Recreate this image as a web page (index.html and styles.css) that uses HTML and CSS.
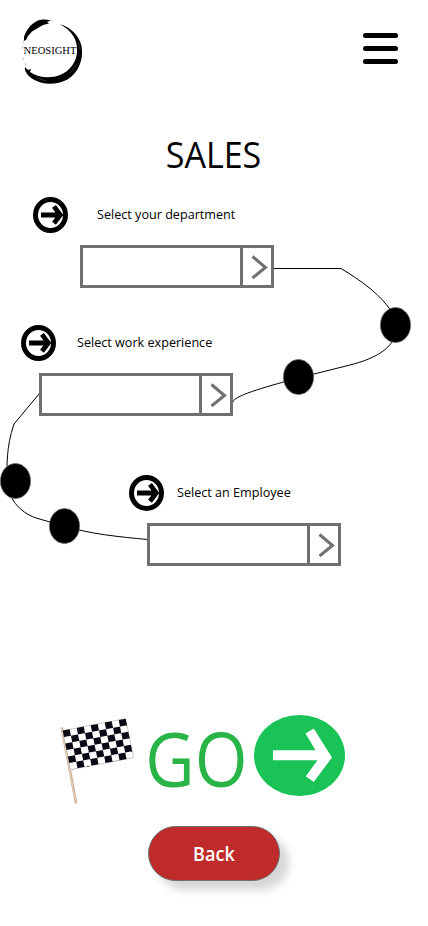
FILE: index.html
```html
<!DOCTYPE html>
<html lang="en">
<head>
<meta charset="utf-8">
<meta name="viewport" content="width=device-width, initial-scale=1">
<title>Neosight - Sales</title>
<link rel="stylesheet" href="styles.css">
</head>
<body>
<svg class="defs" width="0" height="0" aria-hidden="true">
  <symbol id="step-arrow" viewBox="0 0 35 36">
    <ellipse cx="17.5" cy="18" rx="15" ry="15.5" fill="#fff" stroke="#000" stroke-width="5"/>
    <path d="M8 18H27M21 9.3L27.3 18L21 26.3" fill="none" stroke="#000" stroke-width="4.8"/>
  </symbol>
  <symbol id="chevron" viewBox="0 0 28 37">
    <path d="M9.500 8.500L22.500 19.500L9.500 30" fill="none" stroke="#707070" stroke-width="3"/>
  </symbol>
</svg>
<main class="screen">
  <header class="header">
    <svg class="logo" viewBox="0 0 110 100" role="img" aria-label="Neosight">
      <path d="M24 37C26 30 31 24 37 21C41 19 46 19 51 20.5L47 22L49 23.5L43 25L37 28.5L32 31.500L28 36L26 40L24 41Z"/>
      <path d="M60 24.3C70 27 79 35 81.500 46C84 60 78 73 67.500 79.500C57 85 43 85 34.500 80C27 76 24 70 25 67L28 70L31 69L30 72C38 77.500 50 79 60 75C70 71 76.500 62 77 52C78 41 72.500 31 60 24.3Z"/>
      <path d="M24 40L22 44M23 46L22 49M24 57L23 60M25 63L26 66M51 20L53 21" fill="none" stroke="#bbb" stroke-width=".8"/>
      <path d="M37 78L46 81M70 73L77 64M78 42L80 49" fill="none" stroke="#777" stroke-width=".4"/>
      <text class="logo-text" x="23.5" y="53.5" textLength="53" lengthAdjust="spacingAndGlyphs">NEOSIGHT</text>
    </svg>
    <button class="menu" aria-label="Menu"><span></span><span></span><span></span></button>
  </header>
  <h1 class="title"><span>SALES</span></h1>

  <section class="steps">
    <svg class="route" viewBox="0 0 428 380" aria-hidden="true">
      <g fill="none" stroke="#000" stroke-width="1">
        <path d="M273 71.5H341C360 83 382 98 393 117C400 136 397 156 350 168L298 181C273 188 234 198 233 205"/>
        <path d="M39 197L14 227C6 250 7 270 7 284C8 301 19 315 36 321L64 329C90 337 120 340 148 342.5"/>
      </g>
      <g fill="#000" stroke="#707070" stroke-width=".7">
        <ellipse cx="395.5" cy="128" rx="15.1" ry="17.6"/>
        <ellipse cx="298.5" cy="180" rx="15.1" ry="17.6"/>
        <ellipse cx="15.5" cy="284" rx="15.1" ry="17.6"/>
        <ellipse cx="64.5" cy="329" rx="15.1" ry="17.6"/>
      </g>
    </svg>
    <div class="step step-department">
      <div class="step-head"><svg class="step-icon"><use href="#step-arrow"/></svg><span class="label">Select your department</span></div>
      <button class="select" aria-label="Select your department"><span class="value"></span><svg class="chevron"><use href="#chevron"/></svg></button>
    </div>
    <div class="step step-experience">
      <div class="step-head"><svg class="step-icon"><use href="#step-arrow"/></svg><span class="label">Select work experience</span></div>
      <button class="select" aria-label="Select work experience"><span class="value"></span><svg class="chevron"><use href="#chevron"/></svg></button>
    </div>
    <div class="step step-employee">
      <div class="step-head"><svg class="step-icon"><use href="#step-arrow"/></svg><span class="label">Select an Employee</span></div>
      <button class="select" aria-label="Select an Employee"><span class="value"></span><svg class="chevron"><use href="#chevron"/></svg></button>
    </div>
  </section>

  <section class="go-row">
    <svg class="flag" viewBox="0 0 90 100" aria-hidden="true">
      <path d="M11.7 22.5L26.2 98.5" stroke="#c6a98b" stroke-width="2.5"/>
      <path d="M11.5 23L26 98" stroke="#ead5bd" stroke-width="1"/>
      <g transform="matrix(7 -1.33 1.3 6.5 12.7 25.6)">
        <rect width="9" height="6" fill="#fff" stroke="#bbb" stroke-width=".1"/>
        <path fill="#0b0915" fill-rule="evenodd" d="M0 0H1V6H0ZM2 0H3V6H2ZM4 0H5V6H4ZM6 0H7V6H6ZM8 0H9V6H8ZM0 1H9V2H0ZM0 3H9V4H0ZM0 5H9V6H0Z"/>
      </g>
    </svg>
    <span class="go-text"><span>GO</span></span>
    <button class="go-button" aria-label="Go">
      <svg viewBox="0 0 91 81"><ellipse cx="45.5" cy="40.5" rx="45.5" ry="40.5" fill="#19c356"/><path d="M19 35.2H61.5L51.5 18.5L59.7 13.5L78 42.5L59.7 67L51.8 61.2L63.5 45.2H19Z" fill="#fff"/></svg>
    </button>
  </section>
  <button class="back"><span>Back</span></button>
</main>
</body>
</html>
```

FILE: styles.css
```css
* { box-sizing: border-box; }
body {
  margin: 0;
  background: #fff;
  color: #000;
  font-family: "Trebuchet MS", "Open Sans", "Noto Sans", sans-serif;
}
button { padding: 0; border: 0; background: none; font: inherit; }
svg { display: block; }
.defs { position: absolute; }
.screen {
  display: flex;
  flex-direction: column;
  width: 428px;
  height: 926px;
  overflow: hidden;
}
.header {
  display: flex;
  justify-content: space-between;
  align-items: flex-start;
  height: 100px;
  padding-right: 30px;
}
.logo { width: 110px; height: 100px; }
.logo-text { font: 10.5px "Liberation Serif", serif; }
.menu {
  display: flex;
  flex-direction: column;
  gap: 8px;
  width: 35px;
  margin-top: 33px;
}
.menu span { height: 5px; border-radius: 2.5px; background: #000; }
.title {
  height: 60px;
  margin: 25px 0 12px;
  font-size: 36px;
  font-weight: 500;
  line-height: 60px;
  text-align: center;
}
.title span { display: inline-block; transform: scaleX(.945); }
.steps { position: relative; height: 380px; }
.route { position: absolute; inset: 0; width: 428px; height: 380px; }
.step { position: relative; width: 241px; height: 91px; }
.step-department { margin-left: 33px; }
.step-experience { margin: 37px 0 0 21px; }
.step-employee { margin: 59px 0 0 129px; }
.step-head { display: flex; align-items: center; height: 36px; }
.step-icon { width: 35px; height: 36px; }
.label {
  margin-bottom: 2px;
  font-size: 13px;
  line-height: 20px;
  white-space: nowrap;
  transform: scaleX(.97);
  transform-origin: left;
}
.step-department .label { margin-left: 29px; }
.step-experience .label { margin-left: 21px; }
.step-employee .label { margin-left: 13px; }
.select {
  display: flex;
  width: 194px;
  height: 43px;
  margin-top: 12px;
  border: 3px solid #707070;
  background: #fff;
}
.step-department .select { margin-left: 47px; }
.step-experience .select,
.step-employee .select { margin-left: 18px; }
.value { flex: 1; align-self: stretch; }
.chevron {
  width: 31px;
  height: 37px;
  border-left: 3px solid #707070;
}
.go-row {
  display: flex;
  align-items: flex-start;
  height: 110px;
  margin-top: 128px;
  padding-left: 50px;
}
.flag { width: 90px; height: 100px; }
.go-text {
  width: 114px;
  color: #28b446;
  font-size: 75px;
  font-weight: 500;
  line-height: 107px;
  text-align: center;
}
.go-text span {
  display: inline-block;
  margin: 0 -6px 0 -8px;
  transform: scaleX(.905);
}
.go-button { width: 91px; height: 81px; margin-top: 10px; }
.go-button svg { width: 91px; height: 81px; }
.back {
  width: 132px;
  height: 55px;
  margin: 11px 0 0 148px;
  border: 1px solid #707070;
  border-radius: 28px;
  background: #bf2a2b;
  box-shadow: 9px 9px 9px rgba(0, 0, 0, .16);
  color: #fff;
  font-size: 19px;
  font-weight: 600;
  line-height: 55px;
  text-align: center;
}
.back span { display: inline-block; transform: scaleX(.95); }
```
